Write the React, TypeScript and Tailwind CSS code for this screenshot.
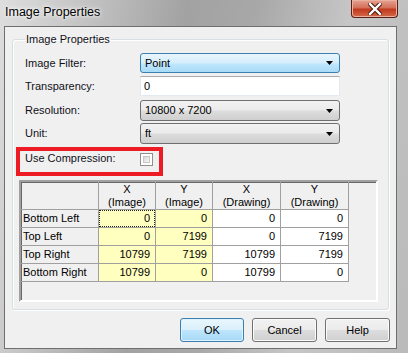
import React from 'react';

const rows = [
  ['Bottom Left', '0', '0', '0', '0'],
  ['Top Left', '0', '7199', '0', '7199'],
  ['Top Right', '10799', '7199', '10799', '7199'],
  ['Bottom Right', '10799', '0', '10799', '0'],
];

const heads = [
  ['X', '(Image)'],
  ['Y', '(Image)'],
  ['X', '(Drawing)'],
  ['Y', '(Drawing)'],
];

function Arrow() {
  return (
    <svg width="7" height="4" viewBox="0 0 7 4">
      <polygon points="0,0 7,0 3.5,4" fill="#000" />
    </svg>
  );
}

function Combo({ value, active }: { value: string; active?: boolean }) {
  return (
    <div
      className={
        active
          ? 'h-[20px] w-[200px] rounded-[3px] border border-[#3c7fb1] bg-[linear-gradient(#eaf6fd,#d3eefc_50%,#bee6fd_55%,#a9dbf6)] flex items-center justify-between pl-[4px] pr-[6px]'
          : 'h-[21px] w-[200px] rounded-[3px] border border-[#707070] bg-[linear-gradient(#f2f2f2,#ebebeb_49%,#dddddd_51%,#cfcfcf)] flex items-center justify-between pl-[4px] pr-[6px]'
      }
    >
      <span>{value}</span>
      <Arrow />
    </div>
  );
}

function Label({ children }: { children: React.ReactNode }) {
  return <div className="w-[115px] text-[#101018]">{children}</div>;
}

function Button({ children, primary }: { children: React.ReactNode; primary?: boolean }) {
  return (
    <div
      className={
        primary
          ? 'h-[24px] rounded-[3px] border border-[#3c7fb1] bg-[linear-gradient(#eaf6fd,#d9f0fc_49%,#bee6fd_51%,#a7d9f5)] shadow-[inset_0_0_0_1px_#dff2fc] flex items-center justify-center'
          : 'h-[24px] rounded-[3px] border border-[#707070] bg-[linear-gradient(#f2f2f2,#ebebeb_49%,#dddddd_51%,#cfcfcf)] shadow-[inset_0_0_0_1px_#fbfbfb] flex items-center justify-center'
      }
    >
      {children}
    </div>
  );
}

export default function App() {
  return (
    <div
      className="w-[408px] h-[353px] overflow-hidden flex flex-col bg-[linear-gradient(100deg,#dedede_0%,#c4c4c4_18%,#a2a2a2_40%,#a8a8a8_55%,#c6c6c6_75%,#bababa_100%)] text-[11px] leading-[13px] text-black"
      style={{ fontFamily: '"Liberation Sans", Arial, sans-serif' }}
    >
      {/* title bar */}
      <div className="h-[26px] flex items-start shrink-0">
        <div className="pl-[5px] pt-[5px] text-[12.5px] leading-[15px] [text-shadow:0_0_6px_#ffffff,0_0_3px_#ffffff]">
          Image Properties
        </div>
        <div className="ml-auto mr-[10px] w-[47px] h-[18px] rounded-b-[4px] border border-t-0 border-[#5a1e14] bg-[linear-gradient(#e6a392,#d3705a_45%,#c0391e_55%,#d46a4c)] shadow-[inset_0_0_0_1px_#eab0a0] flex items-center justify-center">
          <svg width="14" height="12" viewBox="0 0 14 12">
            <path
              d="M2 1 L12 11 M12 1 L2 11"
              stroke="#4a1a10"
              strokeWidth="4.4"
              strokeLinecap="square"
            />
            <path
              d="M2 1 L12 11 M12 1 L2 11"
              stroke="#ffffff"
              strokeWidth="2.4"
              strokeLinecap="square"
            />
          </svg>
        </div>
      </div>

      {/* client area */}
      <div className="ml-[4px] mr-[11px] h-[323px] border border-[#6f6f6f] bg-[#f0f0f0] flex flex-col">
        <fieldset className="mt-[6px] mx-[7px] h-[277px] border border-[#d5dfe5] rounded-[3px] shadow-[inset_1px_1px_0_#ffffff,1px_1px_0_#ffffff] pl-[6px] pt-[7px]">
          <legend className="ml-[6px] px-[1px] text-[11px] leading-[13px] text-[#101018]">Image Properties</legend>

          <div className="flex items-center h-[20px] pl-[6px]">
            <Label>Image Filter:</Label>
            <Combo value="Point" active />
          </div>

          <div className="flex items-center h-[20px] mt-[3px] pl-[6px]">
            <Label>Transparency:</Label>
            <div className="h-[20px] w-[200px] border border-[#e3e9ef] border-t-[#abadb3] bg-white flex items-center pl-[3px]">
              0
            </div>
          </div>

          <div className="flex items-center h-[21px] mt-[4px] pl-[6px]">
            <Label>Resolution:</Label>
            <Combo value="10800 x 7200" />
          </div>

          <div className="flex items-center h-[21px] mt-[2px] pl-[6px]">
            <Label>Unit:</Label>
            <Combo value="ft" />
          </div>

          <div className="relative flex items-center h-[20px] mt-[4px] pl-[6px]">
            <Label>Use Compression:</Label>
            <div className="mt-[3px] w-[13px] h-[13px] border border-[#8f8f8f] bg-white p-[2px]">
              <div className="w-full h-full border border-[#c6c6c6] bg-[linear-gradient(135deg,#d6d6d6,#f8f8f8)]" />
            </div>
            {/* annotation box */}
            <div className="absolute left-[-3px] top-[-1px] w-[147px] h-[29px] border-[4px] border-[#ed1c24]" />
          </div>

          {/* grid */}
          <div className="mt-[12px] w-[359px] h-[122px] border-2 border-t-[#a0a0a0] border-l-[#a0a0a0] border-r-[#ffffff] border-b-[#ffffff] shadow-[inset_1px_1px_0_#696969] bg-[#f0f0f0]">
            <div className="grid grid-cols-[78px_57px_57px_68px_68px] w-[328px] leading-[13px]">
              <div className="h-[28px] border-r border-b border-[#a0a0a0]" />
              {heads.map((h, i) => (
                <div
                  key={i}
                  className="h-[28px] border-r border-b border-[#a0a0a0] flex flex-col items-center justify-center"
                >
                  <span>{h[0]}</span>
                  <span>{h[1]}</span>
                </div>
              ))}
              {rows.map((r, ri) => (
                <React.Fragment key={ri}>
                  <div className="h-[18px] border-r border-b border-[#a0a0a0] flex items-center pl-[2px]">
                    {r[0]}
                  </div>
                  {r.slice(1).map((v, ci) => (
                    <div
                      key={ci}
                      className={
                        (ci < 2 ? 'bg-[#ffffc0] ' : 'bg-white ') +
                        'h-[18px] border-r border-b border-[#a0a0a0]'
                      }
                    >
                      <div
                        className={
                          (ri === 0 && ci === 0
                            ? 'border border-dotted border-[#222222] '
                            : 'border border-transparent ') +
                          'h-full flex items-center justify-end pr-[4px]'
                        }
                      >
                        {v}
                      </div>
                    </div>
                  ))}
                </React.Fragment>
              ))}
            </div>
          </div>
        </fieldset>

        <div className="flex justify-end gap-[8px] pr-[6px] mt-[8px]">
          <div className="w-[64px]">
            <Button primary>OK</Button>
          </div>
          <div className="w-[65px]">
            <Button>Cancel</Button>
          </div>
          <div className="w-[65px]">
            <Button>Help</Button>
          </div>
        </div>
      </div>
    </div>
  );
}
